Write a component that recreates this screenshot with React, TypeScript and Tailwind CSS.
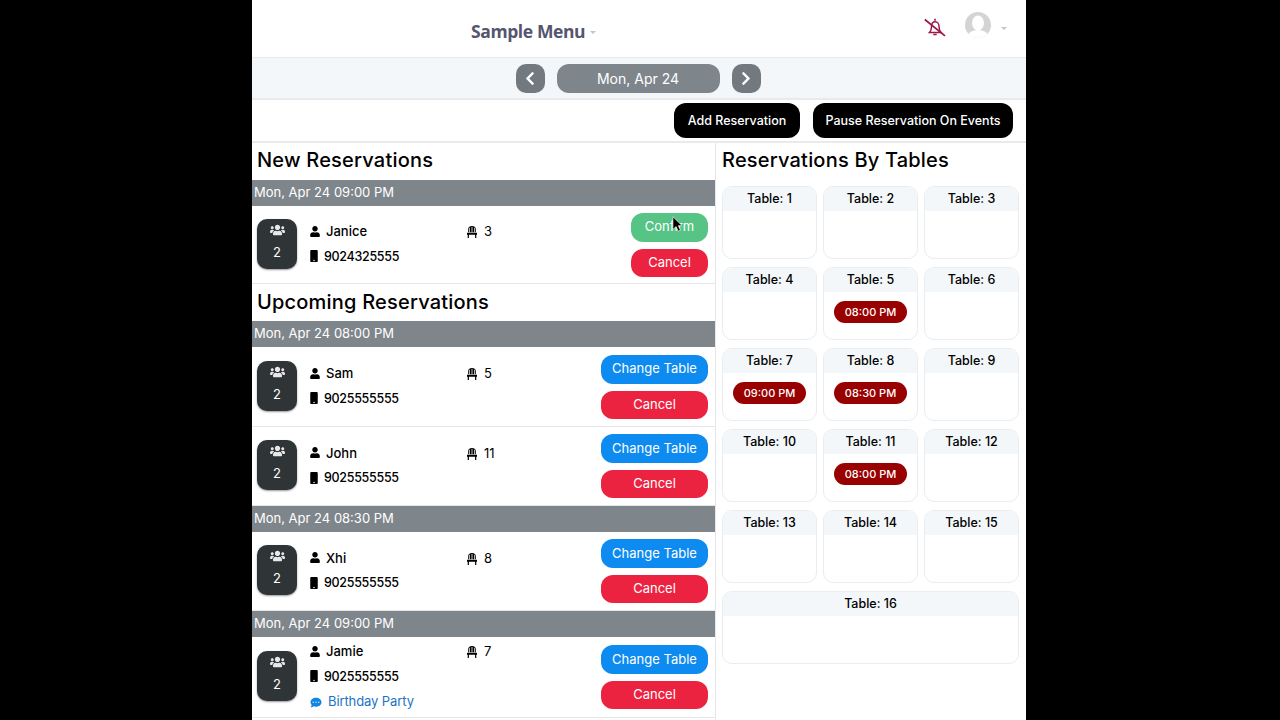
import { FaUsers, FaUser, FaMobile, FaCommentDots, FaChevronLeft, FaChevronRight } from "react-icons/fa";

const Chair = () => (
  <svg viewBox="0 0 10 12" className="w-[10px] h-[12px]" fill="currentColor">
    <path d="M1.2 6.2V3C1.2 1 3 0 5 0s3.8 1 3.8 3v3.2H7.8V1.7h-.7v4.5H5.4V1h-.8v5.2H2.9V1.7h-.7v4.5z" />
    <path d="M0 6.8h10v2H9.3V12H8.1V8.8H1.9V12H.7V8.8H0z" />
  </svg>
);

const Bell = () => (
  <svg viewBox="0 0 22 19" className="absolute left-[672px] top-[18px] w-[22px] h-[19px]" fill="none" stroke="#9c1748">
    <path d="M5.5 14.5c1.6-1.6 2-3 2-5.5 0-3 1.5-5.2 3.6-5.2 2.3 0 4 2.2 4 5.2 0 2.5.5 4 2 5.5H5.5z" strokeWidth="1.5" />
    <path d="M9.3 16.5h3.4M11 .8v2" strokeWidth="1.6" />
    <path d="M.8 1.5 21 17.8" strokeWidth="1.7" />
  </svg>
);

const Avatar = () => (
  <svg viewBox="0 0 26 26" className="absolute left-[713px] top-[12px] w-[26px] h-[26px]">
    <circle cx="13" cy="13" r="13" fill="#d4d4d4" />
    <ellipse cx="13" cy="11" rx="6" ry="7.5" fill="#fff" />
    <path d="M3.5 22c2-3 5.5-4 9.5-4s7.5 1 9.500 4c-2.400 2.500-5.700 4-9.500 4s-7.100-1.500-9.500-4z" fill="#fff" />
  </svg>
);

type R = { name: string; seat: string; phone: string; note?: string; action: string };

function Row({ r, h }: { r: R; h: string }) {
  const confirm = r.action === "Confirm";
  return (
    <div className={`${h} flex items-center border-b border-[#e4e6e8] pl-[5px] pr-[7px]`}>
      <div className="w-[40px] h-[50px] mb-[2px] pb-[4px] rounded-[10px] bg-[#2f3537] shadow-[0_1px_2px_rgba(0,0,0,.4)] flex flex-col items-center justify-center text-white gap-[8px]">
        <FaUsers className="w-[15px] h-[12px] text-[#e8e8e8]" />
        <span className="text-[13px] leading-[16px]">2</span>
      </div>
      <div className="ml-[13px] flex-1 text-[13px] font-medium text-black">
        <div className="h-[25px] flex items-center">
          <div className="w-[157px] flex items-center">
            <FaUser className="w-[10px] h-[11px] mr-[6px] mb-[2px]" />
            <span>{r.name}</span>
          </div>
          <Chair />
          <span className="ml-[7px] font-normal">{r.seat}</span>
        </div>
        <div className="h-[25px] flex items-center">
          <FaMobile className="w-[8px] h-[12px] mr-[6px] mb-[2px]" />
          <span className="text-[12.5px] tracking-[-.3px]">{r.phone}</span>
        </div>
        {r.note && (
          <div className="h-[25px] flex items-center text-[#1a73c8] font-normal tracking-[-.1px]">
            <FaCommentDots className="w-[12px] h-[11px] mr-[6px] text-[#1185e0]" />
            <span>{r.note}</span>
          </div>
        )}
      </div>
      <div className="flex flex-col gap-[7px] items-stretch text-white text-[13px]">
        <button className={`h-[29px] rounded-[12px] flex items-center justify-center ${confirm ? "w-[77px] bg-[#56c484]" : "w-[107px] bg-[#0d8bf0]"}`}>
          {r.action}
        </button>
        <button className="h-[28px] rounded-[12px] bg-[#ec2340] flex items-center justify-center">Cancel</button>
      </div>
    </div>
  );
}

const DateBar = ({ t }: { t: string }) => (
  <div className="h-[26px] bg-[#7e868c] text-white text-[13px] pl-[2px] flex items-center">{t}</div>
);

const Heading = ({ t, cls }: { t: string; cls: string }) => (
  <div className={`${cls} flex items-center text-[20px] tracking-[.2px] font-medium text-black pl-[5px]`}>{t}</div>
);

function Card({ n, time, wide }: { n: number; time?: string; wide?: boolean }) {
  return (
    <div className={`h-[73px] rounded-[10px] border border-[#e9edf0] overflow-hidden ${wide ? "col-span-3" : ""}`}>
      <div className="h-[24px] bg-[#f4f7f9] flex items-center justify-center text-[12.5px] font-medium text-black">Table: {n}</div>
      {time && (
        <div className="flex justify-center mt-[9px]">
          <div className="w-[73px] h-[22px] rounded-full bg-[#990000] text-white text-[11px] font-medium flex items-center justify-center">{time}</div>
        </div>
      )}
    </div>
  );
}

export default function App() {
  const times: Record<number, string> = { 5: "08:00 PM", 7: "09:00 PM", 8: "08:30 PM", 11: "08:00 PM" };
  return (
    <div className="h-screen bg-black flex pl-[252px] overflow-hidden font-[Inter,sans-serif]">
      <div className="w-[774px] h-[720px] bg-white flex flex-col relative">
        <header className="h-[58px] shrink-0 border-b border-[#e8eaec] flex items-center relative">
          <div className="ml-[219px] mt-[6px] flex items-center text-[#55556f] font-['Open_Sans',sans-serif] font-bold text-[17.5px] tracking-[-.4px]">
            Sample Menu
            <span className="ml-[5px] mt-[2px] w-0 h-0 border-x-[3px] border-x-transparent border-t-[3px] border-t-[#c4c4c4]" />
          </div>
          <Bell />
          <Avatar />
          <span className="absolute left-[749px] top-[27px] w-0 h-0 border-x-[3px] border-x-transparent border-t-[3px] border-t-[#c4c4c4]" />
        </header>
        <div className="h-[42px] shrink-0 bg-[#f4f7f9] border-b-2 border-[#e8eaec] flex items-center justify-center gap-[12px] pr-[2px]">
          <button className="w-[29px] h-[29px] rounded-[10px] bg-[#72797f] text-white flex items-center justify-center"><FaChevronLeft className="w-[12px] h-[15px]" /></button>
          <div className="w-[163px] h-[29px] rounded-[12px] bg-[#7e868c] text-white text-[14px] flex items-center justify-center">Mon, Apr 24</div>
          <button className="w-[29px] h-[29px] rounded-[10px] bg-[#72797f] text-white flex items-center justify-center"><FaChevronRight className="w-[12px] h-[15px]" /></button>
        </div>
        <div className="h-[43px] shrink-0 border-b-2 border-[#e8eaec] flex items-center justify-end gap-[13px] pr-[13px] text-white text-[12.5px] font-medium">
          <button className="h-[35px] pt-[1px] w-[126px] rounded-[12px] bg-black">Add Reservation</button>
          <button className="h-[35px] pt-[1px] w-[200px] rounded-[12px] bg-black">Pause Reservation On Events</button>
        </div>
        <div className="flex-1 flex min-h-0">
          <div className="w-[464px] border-r border-[#e4e6e8] overflow-hidden">
            <Heading t="New Reservations" cls="h-[37px] pb-[3px]" />
            <DateBar t="Mon, Apr 24 09:00 PM" />
            <Row h="h-[78px]" r={{ name: "Janice", seat: "3", phone: "9024325555", action: "Confirm" }} />
            <Heading t="Upcoming Reservations" cls="h-[37px] pb-[2px]" />
            <DateBar t="Mon, Apr 24 08:00 PM" />
            <Row h="h-[80px]" r={{ name: "Sam", seat: "5", phone: "9025555555", action: "Change Table" }} />
            <Row h="h-[79px]" r={{ name: "John", seat: "11", phone: "9025555555", action: "Change Table" }} />
            <DateBar t="Mon, Apr 24 08:30 PM" />
            <Row h="h-[79px]" r={{ name: "Xhi", seat: "8", phone: "9025555555", action: "Change Table" }} />
            <DateBar t="Mon, Apr 24 09:00 PM" />
            <Row h="h-[81px]" r={{ name: "Jamie", seat: "7", phone: "9025555555", note: "Birthday Party", action: "Change Table" }} />
          </div>
          <div className="flex-1 pl-[6px] pr-[7px]">
            <div className="h-[37px] pb-[3px] flex items-center text-[20px] tracking-[.2px] font-medium text-black">Reservations By Tables</div>
            <div className="mt-[6px] grid grid-cols-3 gap-x-[6px] gap-y-[8px]">
              {Array.from({ length: 15 }, (_, i) => <Card key={i} n={i + 1} time={times[i + 1]} />)}
              <Card n={16} wide />
            </div>
          </div>
        </div>
        <svg viewBox="0 0 12 18" className="absolute left-[420px] top-[215px] w-[11px] h-[18px]">
          <path d="M1 1v14l3.5-3.2 2.3 5 2.4-1-2.3-5H11z" fill="#000" stroke="#fff" strokeWidth=".7" />
        </svg>
      </div>
    </div>
  );
}
